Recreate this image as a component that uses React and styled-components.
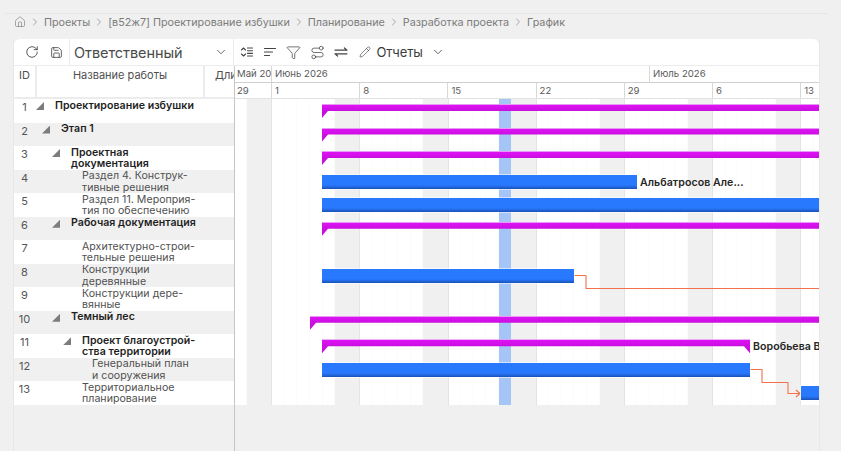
import React from 'react';
import styled, { createGlobalStyle } from 'styled-components';
import { ChevronDown, ChevronRight, Filter, Home, Pencil, RotateCw, Route, Save } from 'lucide-react';

const GlobalStyle = createGlobalStyle`
  html, body { margin: 0; padding: 0; background: #f0f0f0; }
  * { box-sizing: border-box; }
`;

const ROW_H = 23.54;
const DAY_W = 12.6;
const FONT = '"Inter", "Noto Sans", sans-serif';

const crumbs = ['Проекты', '[в52ж7] Проектирование избушки', 'Планирование', 'Разработка проекта', 'График'];

// indent - отступ текста от начала колонки названия
const rows = [
  { id: 1, text: 'Проектирование избушки', indent: 20, tri: true, bold: true, bar: { type: 'sum', from: 87 } },
  { id: 2, text: 'Этап 1', indent: 26, tri: true, bold: true, bar: { type: 'sum', from: 87 } },
  { id: 3, text: 'Проектная\nдокументация', indent: 36, tri: true, bold: true, bar: { type: 'sum', from: 87 } },
  { id: 4, text: 'Раздел 4. Конструк-\nтивные решения', indent: 47, bar: { type: 'task', from: 87, to: 402 }, label: 'Альбатросов Але...' },
  { id: 5, text: 'Раздел 11. Мероприя-\nтия по обеспечению', indent: 47, bar: { type: 'task', from: 87 } },
  { id: 6, text: 'Рабочая документация', indent: 36, tri: true, bold: true, bar: { type: 'sum', from: 87 } },
  { id: 7, text: 'Архитектурно-строи-\nтельные решения', indent: 47 },
  { id: 8, text: 'Конструкции\nдеревянные', indent: 47, bar: { type: 'task', from: 87, to: 339 } },
  { id: 9, text: 'Конструкции дере-\nвянные', indent: 47 },
  { id: 10, text: 'Темный лес', indent: 36, tri: true, bold: true, bar: { type: 'sum', from: 75 } },
  { id: 11, text: 'Проект благоустрой-\nства территории', indent: 47, tri: true, bold: true, bar: { type: 'sum', from: 87, to: 515 }, label: 'Воробьева Валентина' },
  { id: 12, text: 'Генеральный план\nи сооружения', indent: 57, bar: { type: 'task', from: 87, to: 515 } },
  { id: 13, text: 'Территориальное\nпланирование', indent: 47, bar: { type: 'task', from: 566 } },
];

const weeks = ['29', '1', '8', '15', '22', '29', '6', '13'];

const days = Array.from({ length: 47 }, (_, i) => {
  const wd = (i + 4) % 7; // 29 мая - пятница
  return { i, weekend: wd === 5 || wd === 6, saturday: wd === 5, sunday: wd === 6, today: i === 21 };
});

const Page = styled.div`
  width: 841px;
  height: 451px;
  display: flex;
  flex-direction: column;
  overflow: hidden;
  padding-top: 13px;
  background: #f0f0f0;
  font-family: ${FONT};
`;

const TopRule = styled.div`
  height: 1px;
  margin: 0 13px 0 5px;
  background: #e6e6e6;
`;

const Breadcrumbs = styled.nav`
  height: 25px;
  padding: 0 0 9px 14px;
  display: flex;
  align-items: center;
  font-size: 10.8px;
  letter-spacing: -0.03px;
  color: #7c7c7c;
  svg { flex: none; }
`;

const Sep = styled(ChevronRight)`
  margin: 0 3px;
`;

const Card = styled.div`
  flex: 1;
  min-height: 0;
  width: 807px;
  margin-left: 13px;
  display: flex;
  flex-direction: column;
  border-right: 1px solid #e8e8e8;
  border-left: 1px solid #e8e8e8;
  overflow: hidden;
`;

const Toolbar = styled.div`
  height: 27px;
  flex: none;
  display: flex;
  background: #fff;
  border-radius: 6px 6px 0 0;
  border-bottom: 1px solid #ececec;
  color: #444;
`;

const ToolsLeft = styled.div`
  width: 220px;
  flex: none;
  display: flex;
  align-items: center;
`;

const IconButton = styled.span`
  display: flex;
  align-items: center;
  justify-content: center;
  flex: none;
  width: ${(p) => p.$w || 24}px;
  margin-left: ${(p) => p.$ml || 0}px;
  color: #444;
`;

const Select = styled.div`
  margin-left: 1px;
  flex: 1;
  height: 100%;
  padding: 0 5px 0 4px;
  display: flex;
  align-items: center;
  justify-content: space-between;
  border-left: 1px solid #ececec;
  border-right: 1px solid #ececec;
  font-size: 14.5px;
  letter-spacing: -0.08px;
  color: #4a4a4a;
`;

const ToolsRight = styled.div`
  flex: 1;
  display: flex;
  align-items: center;
  padding-left: 1px;
`;

const ReportLabel = styled.span`
  font-size: 13px;
  letter-spacing: -0.1px;
  color: #3c3c3c;
  margin-right: 8px;
`;

const Body = styled.div`
  flex: 1;
  min-height: 0;
  display: flex;
`;

const LeftPane = styled.div`
  width: 220px;
  flex: none;
  display: flex;
  flex-direction: column;
`;

const Divider = styled.div`
  width: 1px;
  flex: none;
  background: #c6c6c6;
`;

const TableHead = styled.div`
  height: 33px;
  flex: none;
  display: grid;
  grid-template-columns: 21px 166px 1fr;
  column-gap: 2px;
  padding-bottom: 2px;
  background: #ececec;
  overflow: hidden;
`;

const HeadCell = styled.div`
  background: #fff;
  padding-top: 2px;
  font-size: 11px;
  color: #505050;
  text-align: ${(p) => (p.$left ? 'left' : 'center')};
  padding-left: ${(p) => (p.$left ? 10 : 0)}px;
  white-space: nowrap;
  overflow: hidden;
  line-height: 14px;
`;

const Row = styled.div`
  height: ${ROW_H}px;
  display: flex;
  background: ${(p) => (p.$even ? '#f0f0f0' : '#fff')};
  overflow: hidden;
`;

const RowId = styled.div`
  width: 21px;
  flex: none;
  padding-top: 1px;
  text-align: center;
  font-size: 11px;
  line-height: 14px;
  color: #555;
`;

const RowTitle = styled.div`
  white-space: pre-line;
  font-size: 10.6px;
  line-height: 11.4px;
  letter-spacing: 0.03px;
  padding-top: 0.5px;
  padding-left: ${(p) => p.$indent}px;
  position: relative;
  font-weight: ${(p) => (p.$bold ? 600 : 400)};
  color: ${(p) => (p.$bold ? '#1e1e1e' : '#505050')};
`;

const Collapse = styled.i`
  position: absolute;
  top: 3px;
  left: ${(p) => p.$indent - 19}px;
  width: 8px;
  height: 8px;
  background: #7c7c7c;
  clip-path: polygon(100% 0, 100% 100%, 0 100%);
`;

const ChartPane = styled.div`
  flex: 1;
  min-width: 0;
  display: flex;
  flex-direction: column;
  overflow: hidden;
`;

const TimeRow = styled.div`
  height: ${(p) => p.$h}px;
  flex: none;
  display: flex;
  background: #fff;
  border-bottom: 1px solid ${(p) => p.$line};
`;

const TimeCell = styled.div`
  width: ${(p) => p.$w}px;
  flex: none;
  padding-left: ${(p) => p.$pad}px;
  overflow: hidden;
  white-space: nowrap;
  font-size: 9.6px;
  line-height: ${(p) => p.$lh}px;
  color: #5a5a5a;
  border-right: 1px solid #d8d8d8;
`;

const Canvas = styled.div`
  position: relative;
  height: ${ROW_H * rows.length}px;
  flex: none;
  overflow: hidden;
`;

const DayGrid = styled.div`
  position: absolute;
  inset: 0;
  display: flex;
  background: #fff;
`;

const Day = styled.div`
  width: ${(p) => (p.$first ? 12 : DAY_W)}px;
  flex: none;
  background: ${(p) => (p.$today ? '#a6c5f7' : p.$weekend ? '#f0f0f0' : 'transparent')};
  border-right: 1px solid ${(p) => (p.$sunday ? '#e4e4e4' : p.$saturday || p.$today ? 'transparent' : '#fbfbfb')};
`;

const BarRows = styled.div`
  position: absolute;
  inset: 0;
  display: grid;
  grid-auto-rows: ${ROW_H}px;
`;

const BarRow = styled.div`
  position: relative;
`;

const SummaryBar = styled.div`
  position: absolute;
  top: 5px;
  height: 14px;
  background: linear-gradient(#e79af3 0, #e79af3 1px, #de12f5 1px, #c90fe0 7px);
  clip-path: ${(p) =>
    p.$closed
      ? 'polygon(0 0, 100% 0, 100% 100%, calc(100% - 6px) 50%, 6px 50%, 0 100%)'
      : 'polygon(0 0, 100% 0, 100% 50%, 6px 50%, 0 100%)'};
`;

const TaskBar = styled.div`
  position: absolute;
  top: 5px;
  height: 14px;
  background: linear-gradient(#2979ff 0, #2979ff 10px, #1a52b8 14px);
  box-shadow: 0 0 0 1px rgba(255, 255, 255, 0.5);
`;

const BarLabel = styled.span`
  position: absolute;
  top: 5px;
  height: 14px;
  line-height: 15px;
  padding-left: 3px;
  white-space: nowrap;
  font-size: 10.6px;
  font-weight: 600;
  letter-spacing: 0.05px;
  color: #262626;
`;

const Links = styled.svg`
  position: absolute;
  inset: 0;
  width: 100%;
  height: 100%;
`;

function ExpandIcon() {
  return (
    <svg width="14" height="14" viewBox="0 0 14 14" fill="none" stroke="#444" strokeWidth="1.1" strokeLinecap="round" strokeLinejoin="round">
      <path d="M1.5 5 3.5 3 5.5 5M1.5 9l2 2 2-2M7.5 3h5M7.5 5.7h5M7.5 8.4h5M7.5 11h5" />
    </svg>
  );
}

function SortIcon() {
  return (
    <svg width="14" height="14" viewBox="0 0 14 14" fill="none" stroke="#444" strokeWidth="1.2" strokeLinecap="round">
      <path d="M1.5 3.5h11M1.5 7h8M1.5 10.5h5" />
    </svg>
  );
}

function SwapIcon() {
  return (
    <svg width="14" height="14" viewBox="0 0 14 14" fill="none" stroke="#444" strokeWidth="1.2" strokeLinecap="round" strokeLinejoin="round">
      <path d="M1 5.2h12L10.4 3M13 8.8H1L3.6 11" />
    </svg>
  );
}

export default function App() {
  return (
    <>
      <GlobalStyle />
      <Page>
        <TopRule />
        <Breadcrumbs>
          <Home size={12} strokeWidth={1.3} />
          {crumbs.map((c) => (
            <React.Fragment key={c}>
              <Sep size={12} strokeWidth={1.3} />
              <span>{c}</span>
            </React.Fragment>
          ))}
        </Breadcrumbs>
        <Card>
          <Toolbar>
            <ToolsLeft>
              <IconButton $ml={6}><RotateCw size={14} strokeWidth={1.5} /></IconButton>
              <IconButton><Save size={13} strokeWidth={1.5} /></IconButton>
              <Select>
                Ответственный
                <ChevronDown size={14} strokeWidth={1.4} />
              </Select>
            </ToolsLeft>
            <ToolsRight>
              <IconButton $w={23.5}><ExpandIcon /></IconButton>
              <IconButton $w={23.5}><SortIcon /></IconButton>
              <IconButton $w={23.5}><Filter size={15} strokeWidth={1.2} /></IconButton>
              <IconButton $w={23.5}><Route size={15} strokeWidth={1.2} /></IconButton>
              <IconButton $w={23.5}><SwapIcon /></IconButton>
              <IconButton $w={24}><Pencil size={12} strokeWidth={1.3} /></IconButton>
              <ReportLabel>Отчеты</ReportLabel>
              <ChevronDown size={14} strokeWidth={1.4} />
            </ToolsRight>
          </Toolbar>
          <Body>
            <LeftPane>
              <TableHead>
                <HeadCell>ID</HeadCell>
                <HeadCell>Название работы</HeadCell>
                <HeadCell $left>Длительность</HeadCell>
              </TableHead>
              {rows.map((r) => (
                <Row key={r.id} $even={r.id % 2 === 0}>
                  <RowId>{r.id}</RowId>
                  <RowTitle $indent={r.indent} $bold={r.bold}>
                    {r.tri && <Collapse $indent={r.indent} />}
                    {r.text}
                  </RowTitle>
                </Row>
              ))}
            </LeftPane>
            <Divider />
            <ChartPane>
              <TimeRow $h={17} $line="#cfcfcf">
                <TimeCell $w={37} $pad={2} $lh={16}>Май 2026</TimeCell>
                <TimeCell $w={378} $pad={3} $lh={16}>Июнь 2026</TimeCell>
                <TimeCell $w={180} $pad={3} $lh={16}>Июль 2026</TimeCell>
              </TimeRow>
              <TimeRow $h={16} $line="#e2e2e2">
                {weeks.map((w, i) => (
                  <TimeCell key={i} $w={i === 0 ? 37 : 88.2} $pad={i === 0 ? 2 : 3} $lh={15}>{w}</TimeCell>
                ))}
              </TimeRow>
              <Canvas>
                <DayGrid>
                  {days.map((d) => (
                    <Day key={d.i} $first={d.i === 0} $weekend={d.weekend} $saturday={d.saturday} $sunday={d.sunday} $today={d.today} />
                  ))}
                </DayGrid>
                <Links>
                  <g fill="none" stroke="#f2724a" strokeWidth="1.1" strokeLinejoin="round">
                    <path d="M339 176.5H351V189.5H590" />
                    <path d="M515 270.5H527V283.5H553V294.5H565M561 291l4 3.5-4 3.5" />
                  </g>
                </Links>
                <BarRows>
                  {rows.map((r) => (
                    <BarRow key={r.id}>
                      {r.bar && r.bar.type === 'sum' && (
                        <SummaryBar
                          $closed={!!r.bar.to}
                          style={{ left: r.bar.from, width: (r.bar.to || 600) - r.bar.from }}
                        />
                      )}
                      {r.bar && r.bar.type === 'task' && (
                        <TaskBar style={{ left: r.bar.from, width: (r.bar.to || 600) - r.bar.from }} />
                      )}
                      {r.label && <BarLabel style={{ left: r.bar.to }}>{r.label}</BarLabel>}
                    </BarRow>
                  ))}
                </BarRows>
              </Canvas>
            </ChartPane>
          </Body>
        </Card>
      </Page>
    </>
  );
}
